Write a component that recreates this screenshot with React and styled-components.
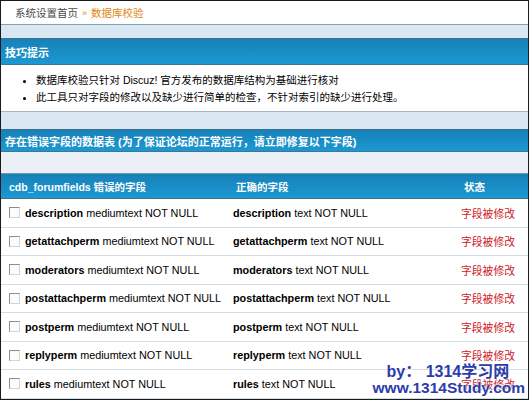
import React from 'react';
import styled, { createGlobalStyle } from 'styled-components';

const GlobalStyle = createGlobalStyle`
  html, body {
    margin: 0;
    padding: 0;
    background: #ffffff;
  }
  body {
    font-family: "Liberation Sans", "Noto Sans CJK SC", sans-serif;
    font-size: 10.5px;
    color: #000;
  }
`;

const Frame = styled.div`
  position: relative;
  box-sizing: border-box;
  width: 529px;
  height: 400px;
  border: 1px solid #1a1a1a;
  overflow: hidden;
  background: #fff;
`;

const Breadcrumb = styled.div`
  height: 23px;
  display: flex;
  align-items: center;
  padding-left: 14px;
  border-bottom: 1px solid #7ea3bb;
  color: #4a4a4a;
  font-size: 10.5px;
`;

const Crumb = styled.span`
  color: ${p => (p.$active ? '#e38613' : '#4a4a4a')};
`;

const Sep = styled.span`
  color: #e38613;
  margin: 0 4px;
  font-size: 9px;
`;

const Band = styled.div`
  height: ${p => p.$h}px;
  background: #d9e7f3;
`;

const Section = styled.div`
  border-top: 1px solid #3b6f8c;
`;

const Header = styled.div`
  height: ${p => p.$h}px;
  display: flex;
  align-items: center;
  padding-left: 4px;
  background: linear-gradient(#1781b8, #1c98d2);
  color: #fff;
  font-weight: bold;
  font-size: 11px;
  border-bottom: 1px solid #3c7896;
`;

const Tips = styled.ul`
  margin: 0;
  padding: 7px 0 5px 35px;
  border-bottom: 1px solid #a7b7c2;
  list-style: disc;

  li {
    line-height: 17px;
    font-size: 10.5px;
  }
`;

const SubBand = styled.div`
  height: 21px;
  background: #eaf0f6;
  border-bottom: 1px solid #6d98b0;
`;

const Row = styled.div`
  display: grid;
  grid-template-columns: 227px 228px 1fr;
  align-items: center;
  height: ${p => (p.$head ? 24 : 27.5)}px;
  background: ${p => (p.$head ? 'linear-gradient(#1781b8, #1c98d2)' : '#fff')};
  color: ${p => (p.$head ? '#fff' : '#000')};
  font-weight: ${p => (p.$head ? 'bold' : 'normal')};
  border-bottom: 1px solid ${p => (p.$head ? '#3c7896' : '#cfdde7')};
  font-size: ${p => (p.$head ? 10.5 : 10.8)}px;
`;

const Cell = styled.div`
  display: flex;
  align-items: center;
  padding-left: ${p => p.$pl}px;
  white-space: nowrap;
  color: ${p => p.$color || 'inherit'};
`;

const Check = styled.span`
  box-sizing: border-box;
  width: 11px;
  height: 11px;
  margin-right: 5px;
  background: #fcfcfc;
  border: 1px solid;
  border-color: #8d8d8d #d4d4d4 #d4d4d4 #8d8d8d;
`;

const Watermark = styled.div`
  position: absolute;
  right: 3px;
  bottom: 2px;
  display: flex;
  flex-direction: column;
  align-items: flex-start;
  font-family: "Liberation Sans", "Noto Sans CJK SC", sans-serif;
  font-weight: bold;
  color: #2c3ca8;
  line-height: 14px;
  text-shadow: 0 0 2px #fff, 0 0 2px #fff, 0 0 1px #fff;
  pointer-events: none;
`;

const WmTop = styled.span`
  font-size: 16px;
  padding-left: 14px;
`;

const WmBottom = styled.span`
  font-size: 15.5px;
  line-height: 18px;
`;

const rows = [
  ['description', 'mediumtext NOT NULL', 'text NOT NULL'],
  ['getattachperm', 'mediumtext NOT NULL', 'text NOT NULL'],
  ['moderators', 'mediumtext NOT NULL', 'text NOT NULL'],
  ['postattachperm', 'mediumtext NOT NULL', 'text NOT NULL'],
  ['postperm', 'mediumtext NOT NULL', 'text NOT NULL'],
  ['replyperm', 'mediumtext NOT NULL', 'text NOT NULL'],
  ['rules', 'mediumtext NOT NULL', 'text NOT NULL'],
];

export default function App() {
  return (
    <>
      <GlobalStyle />
      <Frame>
        <Breadcrumb>
          <Crumb>系统设置首页</Crumb>
          <Sep>»</Sep>
          <Crumb $active>数据库校验</Crumb>
        </Breadcrumb>
        <Band $h={13} />
        <Section>
          <Header $h={25}>技巧提示</Header>
          <Tips>
            <li>数据库校验只针对 Discuz! 官方发布的数据库结构为基础进行核对</li>
            <li>此工具只对字段的修改以及缺少进行简单的检查，不针对索引的缺少进行处理。</li>
          </Tips>
        </Section>
        <Band $h={17} />
        <Section>
          <Header $h={21}>存在错误字段的数据表 (为了保证论坛的正常运行，请立即修复以下字段)</Header>
          <SubBand />
          <Row $head>
            <Cell $pl={8}>cdb_forumfields 错误的字段</Cell>
            <Cell $pl={8}>正确的字段</Cell>
            <Cell $pl={8}>状态</Cell>
          </Row>
          {rows.map(([name, bad, good]) => (
            <Row key={name}>
              <Cell $pl={8}>
                <Check />
                <b>{name}</b>&nbsp;{bad}
              </Cell>
              <Cell $pl={5}>
                <b>{name}</b>&nbsp;{good}
              </Cell>
              <Cell $pl={5} $color="#cc2229">字段被修改</Cell>
            </Row>
          ))}
        </Section>
        <Watermark>
          <WmTop>by：&nbsp;1314学习网</WmTop>
          <WmBottom>www.1314Study.com</WmBottom>
        </Watermark>
      </Frame>
    </>
  );
}
